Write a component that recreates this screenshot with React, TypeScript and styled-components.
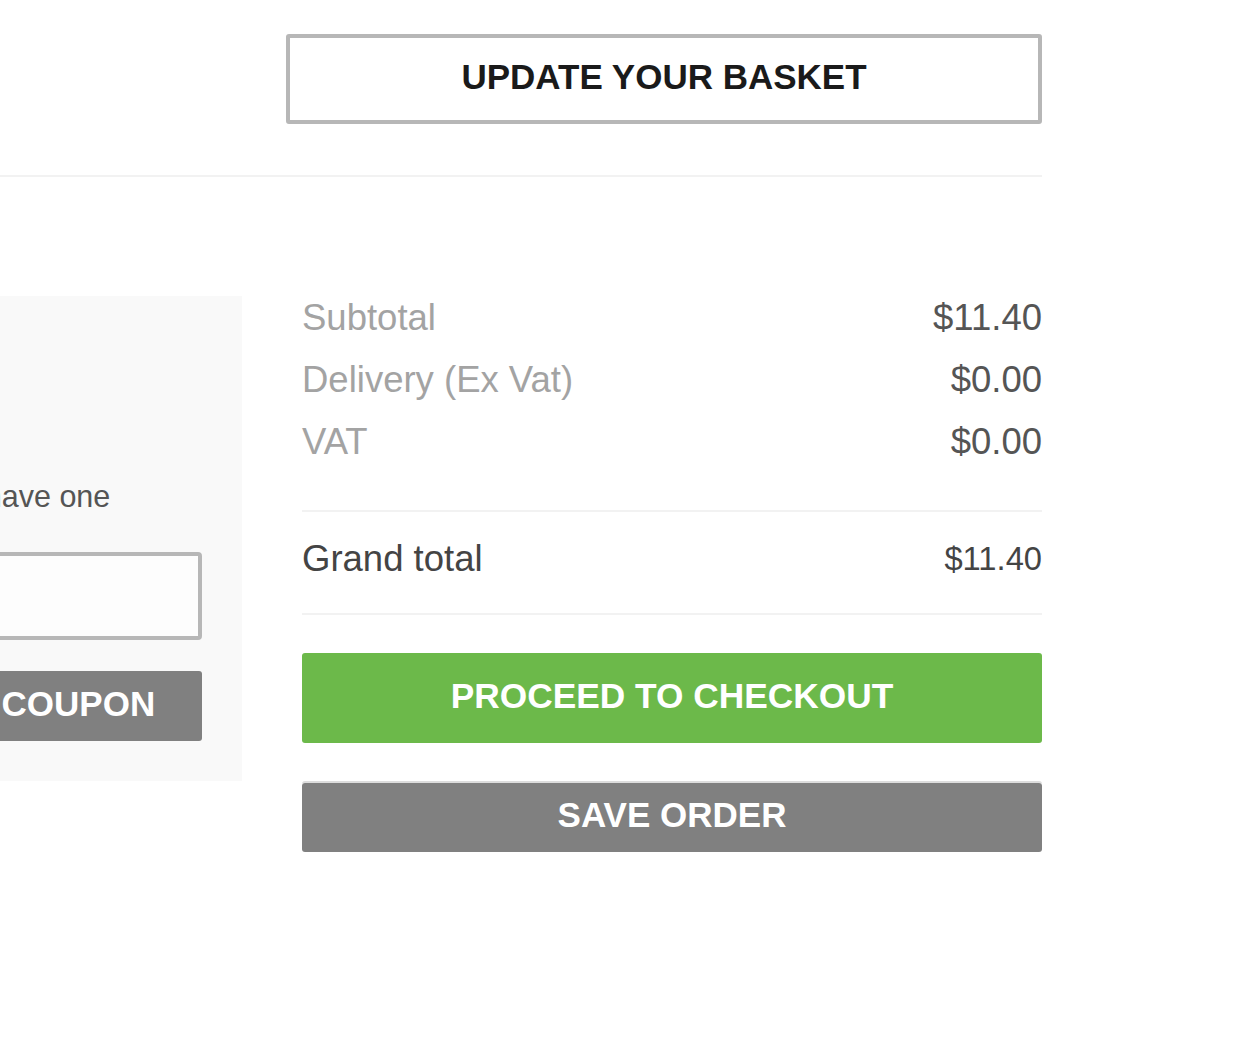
import React from "react";
import styled, { createGlobalStyle } from "styled-components";

const Global = createGlobalStyle`
  html, body { margin: 0; padding: 0; background: #ffffff; overflow: hidden; }
  body { font-family: "Liberation Sans", Arial, Helvetica, sans-serif; }
  * { box-sizing: border-box; }
`;

const Page = styled.div`
  width: 1360px;
  margin-left: -318px;
  padding-top: 34px;
`;

const ActionsRow = styled.div`
  display: flex;
  justify-content: flex-end;
`;

const OutlineButton = styled.button`
  width: 756px;
  height: 90px;
  border: 4px solid #b7b7b7;
  border-radius: 3px;
  background: #ffffff;
  color: #1a1a1a;
  font-family: inherit;
  font-weight: 700;
  font-size: 35px;
  text-transform: uppercase;
  cursor: pointer;
  padding: 0 0 4px;
`;

const Rule = styled.hr<{ $top: number; $bottom: number }>`
  border: 0;
  height: 2px;
  background: #f2f2f2;
  margin: ${(p) => `${p.$top}px 0 ${p.$bottom}px`};
`;

const Columns = styled.div`
  display: grid;
  grid-template-columns: 560px 740px;
  column-gap: 60px;
  align-items: start;
`;

const CouponPanel = styled.section`
  background: #f9f9f9;
  padding: 40px;
  display: flex;
  flex-direction: column;
  height: 485px;
`;

const CouponTitle = styled.h3`
  margin: 0 0 100px;
  font-size: 30px;
  line-height: 40px;
  font-weight: 700;
  color: #444;
`;

const CouponText = styled.p`
  margin: 0 0 36px;
  font-size: 30.5px;
  line-height: 40px;
  color: #555555;
  white-space: nowrap;
`;

const CouponInput = styled.input`
  height: 89px;
  border: 4px solid #b7b7b7;
  border-radius: 4px;
  background: #fdfdfd;
  font-family: inherit;
  font-size: 30px;
  padding: 0 16px;
  outline: none;
`;

const SolidButton = styled.button<{ $bg: string; $h: number; $size: number }>`
  width: 100%;
  height: ${(p) => p.$h}px;
  border: 0;
  border-radius: 3px;
  background: ${(p) => p.$bg};
  color: #ffffff;
  font-family: inherit;
  font-weight: 700;
  font-size: ${(p) => p.$size}px;
  text-transform: uppercase;
  white-space: nowrap;
  cursor: pointer;
  padding: 0 0 5px;
`;

const CouponButton = styled(SolidButton)`
  margin-top: 31px;
`;

const Totals = styled.section`
  display: flex;
  flex-direction: column;
`;

const Lines = styled.div`
  display: flex;
  flex-direction: column;
  gap: 18px;
`;

const Line = styled.div`
  display: flex;
  justify-content: space-between;
  align-items: center;
  height: 44px;
  line-height: 44px;
`;

const Label = styled.span<{ $grand?: boolean }>`
  color: ${(p) => (p.$grand ? "#444444" : "#a3a3a3")};
  font-size: 36.5px;
`;

const Amount = styled.span<{ $grand?: boolean }>`
  color: ${(p) => (p.$grand ? "#444444" : "#555555")};
  font-size: ${(p) => (p.$grand ? "32.7px" : "36.5px")};
`;

const CheckoutWrap = styled.div`
  margin-top: 38px;
`;

const SaveWrap = styled.div`
  margin-top: 38px;
  border-top: 2px solid #dddddd;
  border-radius: 3px;
`;

const lines = [
  { label: "Subtotal", value: "$11.40" },
  { label: "Delivery (Ex Vat)", value: "$0.00" },
  { label: "VAT", value: "$0.00" },
];

export default function App() {
  return (
    <>
      <Global />
      <Page>
        <ActionsRow>
          <OutlineButton type="button">Update your basket</OutlineButton>
        </ActionsRow>
        <Rule $top={51} $bottom={119} />
        <Columns>
          <CouponPanel>
            <CouponTitle>Coupon</CouponTitle>
            <CouponText>Enter a code if you have one</CouponText>
            <CouponInput type="text" aria-label="Coupon code" />
            <CouponButton type="button" $bg="#808080" $h={70} $size={35}>
              Apply your coupon
            </CouponButton>
          </CouponPanel>
          <Totals>
            <Lines>
              {lines.map((l) => (
                <Line key={l.label}>
                  <Label>{l.label}</Label>
                  <Amount>{l.value}</Amount>
                </Line>
              ))}
            </Lines>
            <Rule $top={46} $bottom={25} />
            <Line>
              <Label $grand>Grand total</Label>
              <Amount $grand>$11.40</Amount>
            </Line>
            <Rule $top={32} $bottom={0} />
            <CheckoutWrap>
              <SolidButton type="button" $bg="#6cb94a" $h={90} $size={35.3}>
                Proceed to checkout
              </SolidButton>
            </CheckoutWrap>
            <SaveWrap>
              <SolidButton type="button" $bg="#808080" $h={69} $size={35}>
                Save order
              </SolidButton>
            </SaveWrap>
          </Totals>
        </Columns>
      </Page>
    </>
  );
}
